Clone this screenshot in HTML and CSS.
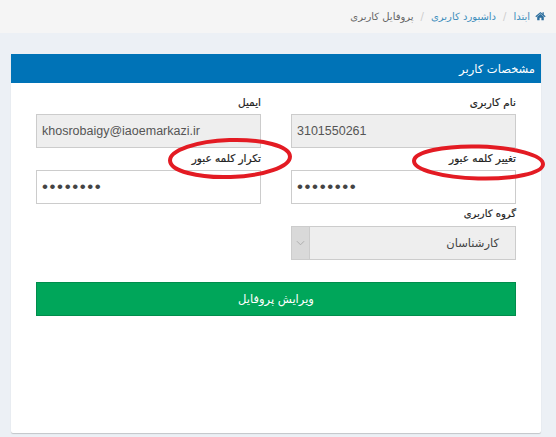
FILE: index.html
```html
<!DOCTYPE html>
<html lang="fa">
<head>
<meta charset="utf-8">
<title>پروفایل کاربری</title>
<link rel="stylesheet" href="styles.css">
</head>
<body>
<div class="page">
  <nav class="breadcrumb" dir="rtl">
    <a class="crumb" href="#"><svg class="home" viewBox="0 0 12 10" width="11" height="10"><path d="M6 0.6 L0.4 5.4 L1.3 6.3 L6 2.3 L10.7 6.3 L11.6 5.4 L9.6 3.7 L9.6 1 L8.2 1 L8.2 2.5 Z M2.4 5.9 L2.4 9.6 L5 9.6 L5 7 L7 7 L7 9.6 L9.6 9.6 L9.6 5.9 L6 2.9 Z" fill="#2d6f9e"/></svg>ابتدا</a>
    <span class="sep">/</span>
    <a class="crumb" href="#">داشبورد کاربری</a>
    <span class="sep">/</span>
    <span class="current">پروفایل کاربری</span>
  </nav>
  <main class="content">
    <section class="box" dir="rtl">
      <header class="box-header">مشخصات کاربر</header>
      <div class="box-body">
        <div class="form-grid">
          <div class="group">
            <label class="label">نام کاربری</label>
            <input class="field" type="text" value="3101550261" disabled>
          </div>
          <div class="group">
            <label class="label">ایمیل</label>
            <input class="field" type="text" value="khosrobaigy@iaoemarkazi.ir" disabled>
          </div>
          <div class="group">
            <label class="label">تغییر کلمه عبور</label>
            <input class="field pw" type="password" value="12345678">
          </div>
          <div class="group">
            <label class="label">تکرار کلمه عبور</label>
            <input class="field pw" type="password" value="12345678">
          </div>
          <div class="group">
            <label class="label short">گروه کاربری</label>
            <div class="select">
              <span class="select-text">کارشناسان</span>
              <span class="select-arrow"><svg viewBox="0 0 10 6" width="9" height="6"><path d="M1 1 L5 5 L9 1" fill="none" stroke="#a9a9a9" stroke-width="1"/></svg></span>
            </div>
          </div>
        </div>
        <button class="btn" type="button">ویرایش پروفایل</button>
      </div>
    </section>
  </main>
  <svg class="annot" width="556" height="437" viewBox="0 0 556 437">
    <ellipse cx="230" cy="158.5" rx="60" ry="18.5" transform="rotate(-2 230 158.5)" fill="none" stroke="#e31b23" stroke-width="4"/>
    <ellipse cx="478.5" cy="162.5" rx="64.5" ry="16" transform="rotate(1.5 478.5 162.5)" fill="none" stroke="#e31b23" stroke-width="4"/>
  </svg>
</div>
</body>
</html>
```

FILE: styles.css
```css
html, body {
  margin: 0;
  padding: 0;
}
body {
  background: #ecf0f5;
  font-family: "DejaVu Sans", "Liberation Sans", sans-serif;
  color: #333;
}
.page {
  position: relative;
  width: 556px;
  height: 437px;
  overflow: hidden;
}
.breadcrumb {
  height: 32px;
  background: #f5f5f5;
  display: flex;
  align-items: center;
  gap: 7px;
  padding: 0 10px 1px 0;
  font-size: 10px;
}
.crumb {
  color: #3c8dbc;
  text-decoration: none;
  display: flex;
  align-items: center;
  gap: 5px;
}
.home {
  display: block;
}
.sep {
  color: #ccc;
}
.current {
  color: #666;
}
.content {
  padding: 21px 15px 0 11px;
}
.box {
  background: #fff;
  height: 379px;
  box-shadow: 0 1px 1px rgba(0, 0, 0, 0.18);
  border-radius: 0 0 2px 2px;
}
.box-header {
  background: #0073b7;
  color: #fff;
  height: 29px;
  display: flex;
  align-items: center;
  padding: 0 6px;
  font-size: 11.5px;
}
.box-body {
  padding: 10px 25px;
}
.form-grid {
  display: grid;
  grid-template-columns: 1fr 1fr;
  column-gap: 30px;
  row-gap: 1px;
}
.group {
  display: flex;
  flex-direction: column;
}
.label {
  display: block;
  font-size: 10.5px;
  line-height: 18px;
  margin-bottom: 3px;
  color: #222;
  -webkit-text-stroke: 0.2px #222;
}
.label.short {
  font-size: 10px;
}
.field {
  box-sizing: border-box;
  height: 34px;
  width: 100%;
  margin: 0;
  border: 1px solid #ccc;
  background: #fff;
  direction: ltr;
  text-align: left;
  padding: 0 5px;
  font-family: "Liberation Sans", Arial, sans-serif;
  font-size: 12.5px;
  color: #555;
  outline: none;
}
.field:disabled {
  background: #eee;
  color: #555;
  opacity: 1;
}
.pw {
  font-size: 17px;
  color: #444;
  letter-spacing: 1.6px;
}
.select {
  box-sizing: border-box;
  height: 34px;
  border: 1px solid #ccc;
  background: #eee;
  display: flex;
}
.select-text {
  flex: 1;
  display: flex;
  align-items: center;
  padding: 0 16px;
  font-size: 11.5px;
  color: #444;
}
.select-arrow {
  width: 17px;
  background: #d9d9d9;
  border-right: 1px solid #ccc;
  display: flex;
  align-items: center;
  justify-content: center;
}
.select-arrow svg {
  display: block;
}
.btn {
  display: block;
  box-sizing: border-box;
  width: 100%;
  height: 34px;
  margin-top: 22px;
  background: #00a65a;
  border: 1px solid #008d4c;
  color: #fff;
  font-family: "DejaVu Sans", sans-serif;
  font-size: 11.5px;
  cursor: pointer;
}
.annot {
  position: absolute;
  left: 0;
  top: 0;
  pointer-events: none;
}
```
